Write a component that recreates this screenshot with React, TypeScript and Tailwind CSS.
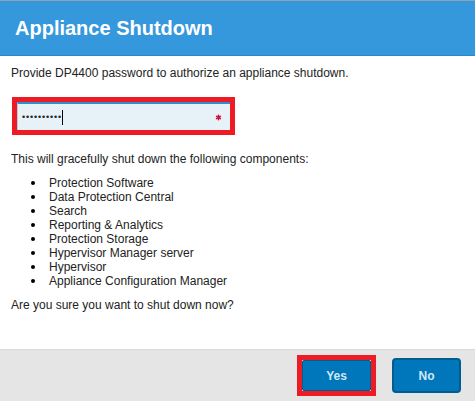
import { Asterisk } from 'lucide-react';

const components = [
  'Protection Software',
  'Data Protection Central',
  'Search',
  'Reporting & Analytics',
  'Protection Storage',
  'Hypervisor Manager server',
  'Hypervisor',
  'Appliance Configuration Manager',
];

export default function App() {
  return (
    <div className="w-[475px] h-[401px] bg-white flex flex-col overflow-hidden font-['Liberation_Sans',Arial,sans-serif] text-[#222]">
      {/* Header */}
      <div className="h-[56px] shrink-0 bg-[#3598dc] border-t border-[#8fa3b3] border-b border-b-[#2f88c6] flex items-center px-[15px]">
        <h1 className="text-[20px] font-bold text-white leading-none">Appliance Shutdown</h1>
      </div>

      {/* Body */}
      <div className="flex-1 px-[11px] text-[12px] leading-[14px]">
        <p className="mt-[10px]">Provide DP4400 password to authorize an appliance shutdown.</p>

        <div className="mt-[17px] ml-[1px] w-[223px] border-[5px] border-[#ed1c24]">
          <div className="h-[28px] bg-[#e6f2f8] border-t-2 border-t-[#2b8fd0] border-l border-l-[#a9d2ea] flex items-center pl-[4px] pr-[7px]">
            <span className="text-[9px] tracking-[0.85px] leading-none">••••••••••</span>
            <span className="w-px h-[15px] bg-black" />
            <Asterisk className="ml-auto w-[9px] h-[9px] text-[#d0103a]" strokeWidth={4} />
          </div>
        </div>

        <p className="mt-[17px]">This will gracefully shut down the following components:</p>

        <ul className="mt-[10px]">
          {components.map((c) => (
            <li key={c} className="flex items-center h-[14px]">
              <span className="ml-[20px] w-[4px] h-[4px] rounded-full bg-black shrink-0" />
              <span className="ml-[14px]">{c}</span>
            </li>
          ))}
        </ul>

        <p className="mt-[10px]">Are you sure you want to shut down now?</p>
      </div>

      {/* Footer */}
      <div className="h-[52px] shrink-0 bg-[#e5e5e5] border-t border-[#dadada] flex items-center justify-end pr-[14px] gap-[16px]">
        <div className="border-[5px] border-[#ed1c24]">
          <button className="w-[69px] h-[31px] bg-[#0077ba] border border-[#005d92] rounded-[2px] text-[#cfe7f6] text-[12px] font-bold">
            Yes
          </button>
        </div>
        <button className="w-[69px] h-[35px] bg-[#0077ba] border-2 border-[#005d92] rounded-[4px] text-[#cfe7f6] text-[12px] font-bold">
          No
        </button>
      </div>
    </div>
  );
}
